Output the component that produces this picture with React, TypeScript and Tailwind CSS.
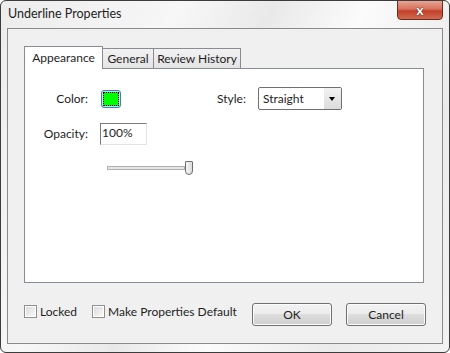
const font = { fontFamily: 'Lato, "Noto Sans", sans-serif' }

// ─── Small controls ───────────────────────────────────────────────────────────

function Checkbox({ label }: { label: string }) {
  return (
    <div className="flex items-center gap-[3px]">
      <div className="flex h-[13px] w-[13px] items-center justify-center border border-[#8f8f8f] bg-white">
        <div className="h-[9px] w-[9px] bg-gradient-to-br from-[#dcdcdc] to-[#f8f8f8]" />
      </div>
      <span className="text-[12px] leading-none text-[#1e1e1e]">{label}</span>
    </div>
  )
}

function Button({ label }: { label: string }) {
  return (
    <button className="flex h-[23px] w-[80px] items-center justify-center rounded-[3px] border border-[#707070] bg-[linear-gradient(#f2f2f2_0%,#ebebeb_50%,#dddddd_50%,#cfcfcf_100%)] text-[12px] text-[#1e1e1e] shadow-[inset_0_0_0_1px_#fcfcfc]">
      {label}
    </button>
  )
}

function Tab({ label, active, width }: { label: string; active?: boolean; width: string }) {
  if (active) {
    return (
      <div className={`relative z-10 -mb-px flex h-[23px] items-center justify-center border border-b-0 border-[#898c95] bg-white text-[12px] text-[#1e1e1e] ${width}`}>
        {label}
      </div>
    )
  }
  return (
    <div className={`mt-[2px] -ml-px flex h-[20px] items-center justify-center border border-b-0 border-[#898c95] bg-[linear-gradient(#f2f2f2,#e3e3e3)] text-[12px] text-[#1e1e1e] ${width}`}>
      {label}
    </div>
  )
}

// ─── Dialog ───────────────────────────────────────────────────────────────────

export default function App() {
  return (
    <div style={font} className="h-[353px] w-[450px] bg-white">
      <div className="relative flex h-[353px] w-[450px] flex-col overflow-hidden rounded-[6px] border border-[#3c3c3c] bg-[linear-gradient(115deg,#ececec_0%,#f7f7f7_30%,#e9e9e9_45%,#fbfbfb_60%,#ebebeb_80%,#f2f2f2_100%)]">

        {/* Title bar */}
        <div className="flex h-[27px] shrink-0 items-center pl-[7px]">
          <span className="text-[12.5px] text-[#1e1e1e]">Underline Properties</span>
        </div>

        {/* Close button */}
        <div className="absolute right-[6px] top-[-1px] flex h-[20px] w-[46px] items-center justify-center rounded-b-[4px] border border-[#6b2a22] bg-[linear-gradient(#e8a493_0%,#d6705c_45%,#c2402b_55%,#d16a4e_100%)]">
          <span className="text-[14px] font-bold leading-none text-white [text-shadow:0_0_1px_#4a1a14,0_0_1px_#4a1a14]">x</span>
        </div>

        {/* Client area */}
        <div className="mx-[6px] flex flex-1 flex-col border border-[#8a8a8a] bg-[#f0f0f0] px-[16px] pt-[17px]">

          {/* Tabs */}
          <div className="flex items-end">
            <Tab label="Appearance" active width="w-[79px]" />
            <Tab label="General" width="w-[52px]" />
            <Tab label="Review History" width="w-[88px]" />
          </div>

          {/* Tab panel */}
          <div className="flex h-[215px] w-[400px] flex-col border border-[#898c95] bg-white">

            {/* Color / Style row */}
            <div className="mt-[18px] flex h-[23px] items-center">
              <span className="w-[63px] text-right text-[12px] text-[#1e1e1e]">Color:</span>
              <div className="ml-[13px] flex h-[18px] w-[20px] items-center justify-center rounded-[3px] border border-[#3c7fb1] bg-[#c4e5f6] p-[1px]">
                <div className="h-full w-full border border-dotted border-black bg-[#00ff00]" />
              </div>
              <span className="ml-[96px] text-[12px] text-[#1e1e1e]">Style:</span>
              <div className="ml-[12px] flex h-[23px] w-[84px] items-center rounded-[2px] border border-[#707070] bg-white">
                <span className="flex-1 pl-[4px] text-[12px] text-[#1e1e1e]">Straight</span>
                <div className="flex h-full w-[17px] items-center justify-center bg-[linear-gradient(#f2f2f2,#dcdcdc)]">
                  <div className="h-0 w-0 border-x-[3.5px] border-t-[4px] border-x-transparent border-t-black" />
                </div>
              </div>
            </div>

            {/* Opacity row */}
            <div className="mt-[13px] flex h-[22px] items-center">
              <span className="w-[63px] text-right text-[12px] text-[#1e1e1e]">Opacity:</span>
              <div className="ml-[12px] flex h-[22px] w-[47px] items-start border border-[#7a7a7a] border-r-[#e3e3e3] border-b-[#e3e3e3] bg-white pl-[1px]">
                <span className="text-[12px] leading-[17px] text-[#1e1e1e]">100%</span>
              </div>
            </div>

            {/* Slider */}
            <div className="ml-[82px] mt-[16px] flex h-[14px] w-[87px] items-center">
              <div className="h-[4px] w-[78px] border border-[#b0b0b0] bg-[#e6e6e6]" />
              <div className="h-[14px] w-[8px] rounded-b-[4px] rounded-t-[1px] border border-[#6f6f6f] bg-[linear-gradient(90deg,#f7f7f7,#dcdcdc)]" />
            </div>
          </div>

          {/* Footer */}
          <div className="mt-[20px] flex items-start">
            <div className="mt-[2px] flex items-center gap-[15px]">
              <Checkbox label="Locked" />
              <Checkbox label="Make Properties Default" />
            </div>
            <div className="ml-auto flex gap-[14px]">
              <Button label="OK" />
              <Button label="Cancel" />
            </div>
          </div>
        </div>

        {/* Bottom frame */}
        <div className="h-[8px] shrink-0" />
      </div>
    </div>
  )
}
